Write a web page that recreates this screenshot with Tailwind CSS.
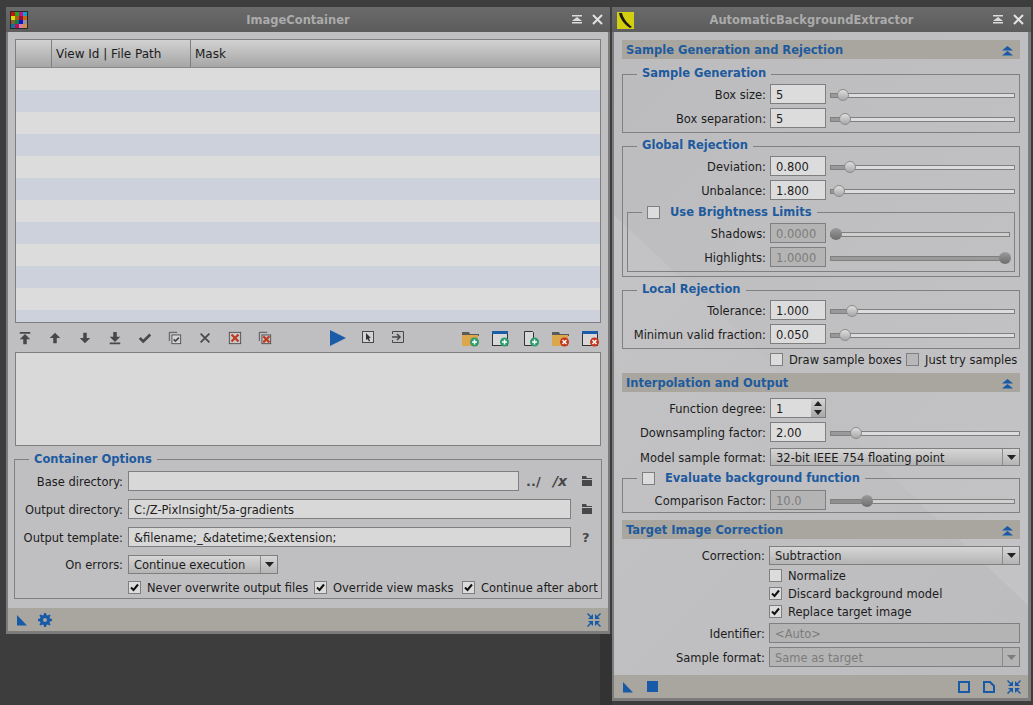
<!DOCTYPE html>
<html lang="en">
  <head>
    <meta charset="UTF-8" />
    <title>PixInsight process windows</title>
    <script src="https://cdn.jsdelivr.net/npm/@tailwindcss/browser@4"></script>
  </head>
  <body class="relative h-[705px] w-[1033px] overflow-hidden bg-[#3d3d3d] font-['DejaVu_Sans',sans-serif] text-[11.5px] leading-[15px] text-[#1c1c1c]">
    <div class="absolute left-[600px] top-[634px] h-[71px] w-[12px] bg-[#333333]"></div>

    <!-- ImageContainer -->
    <div class="absolute left-[6px] top-[7px] flex h-[627px] w-[604px] flex-col border-x-2 border-b-[3px] border-[#7c7c7c]">
      <div class="relative -mx-[2px] flex h-[25px] shrink-0 items-center justify-center bg-gradient-to-b from-[#6a6a6a] to-[#5c5c5c] pr-[20px] pt-[2px] font-bold text-[#ababab]">
        <svg class="absolute left-[4px] top-[4px] size-[18px]" viewBox="0 0 18 18">
          <rect width="18" height="18" fill="#2a2a2a" />
          <rect x="1" y="1" width="4" height="4" fill="#d01010" /><rect x="5" y="1" width="4" height="4" fill="#10b010" /><rect x="9" y="1" width="4" height="4" fill="#c01090" /><rect x="13" y="1" width="4" height="4" fill="#10a0c8" />
          <rect x="1" y="5" width="4" height="4" fill="#e0e000" /><rect x="5" y="5" width="4" height="4" fill="#a06010" /><rect x="9" y="5" width="4" height="4" fill="#901040" /><rect x="13" y="5" width="4" height="4" fill="#d06010" />
          <rect x="1" y="9" width="4" height="4" fill="#806030" /><rect x="5" y="9" width="4" height="4" fill="#108040" /><rect x="9" y="9" width="4" height="4" fill="#1010d0" /><rect x="13" y="9" width="4" height="4" fill="#909090" />
          <rect x="1" y="13" width="4" height="4" fill="#1070a0" /><rect x="5" y="13" width="4" height="4" fill="#c01050" /><rect x="9" y="13" width="4" height="4" fill="#d080b0" /><rect x="13" y="13" width="4" height="4" fill="#d09040" />
        </svg>
        ImageContainer
        <svg class="absolute left-[566px] top-[8px] size-[10px]" viewBox="0 0 10 10" fill="#dcdcdc"><path d="M0 0h10v1.500H0zM5 2l5 4H0zM0 7h10v1.500H0z" /></svg>
        <svg class="absolute left-[586px] top-[7px] size-[11px]" viewBox="0 0 11 11" stroke="#e2e2e2" stroke-width="2"><path d="M1 1l9 9M10 1l-9 9" /></svg>
      </div>

      <div class="flex flex-1 flex-col bg-[#bfbfc1] px-[7px] pt-[7px]">
        <div class="h-[284px] w-[586px] shrink-0 overflow-hidden border border-[#7f7f7f] bg-[#dcdcdc]">
          <div class="flex h-[28px] items-center border-b border-[#8a8a8a] bg-gradient-to-b from-[#d2d2d2] to-[#a6a6a6] text-[12px]">
            <div class="h-full w-[36px] border-r border-[#808080]"></div>
            <div class="flex h-full w-[139px] items-center border-r border-[#808080] pl-[4px] pt-[2px]">View Id | File Path</div>
            <div class="pl-[4px] pt-[2px]">Mask</div>
          </div>
          <div class="h-[22px]"></div>
          <div class="h-[22px] bg-[#cdd1dc]"></div>
          <div class="h-[22px]"></div>
          <div class="h-[22px] bg-[#cdd1dc]"></div>
          <div class="h-[22px]"></div>
          <div class="h-[22px] bg-[#cdd1dc]"></div>
          <div class="h-[22px]"></div>
          <div class="h-[22px] bg-[#cdd1dc]"></div>
          <div class="h-[22px]"></div>
          <div class="h-[22px] bg-[#cdd1dc]"></div>
          <div class="h-[22px]"></div>
          <div class="h-[22px] bg-[#cdd1dc]"></div>
        </div>

        <div class="-mx-[5px] flex h-[29px] shrink-0 items-center justify-between">
          <div class="flex">
            <div class="flex w-[30px] justify-center"><svg class="mt-px size-[14px]" viewBox="0 0 16 16" fill="#484848"><path d="M2 1h12v2H2zM8 3.500l6 6h-4V15H6V9.500H2z" /></svg></div>
            <div class="flex w-[30px] justify-center"><svg class="mt-px size-[14px]" viewBox="0 0 16 16" fill="#484848"><path d="M8 2l6 6h-4v6H6V8H2z" /></svg></div>
            <div class="flex w-[30px] justify-center"><svg class="mt-px size-[14px]" viewBox="0 0 16 16" fill="#484848"><path d="M8 14l6-6h-4V2H6v6H2z" /></svg></div>
            <div class="flex w-[30px] justify-center"><svg class="mt-px size-[14px]" viewBox="0 0 16 16" fill="#484848"><path d="M2 13h12v2H2zM8 12.500l6-6h-4V1H6v5.500H2z" /></svg></div>
            <div class="flex w-[30px] justify-center"><svg class="mt-px size-[14px]" viewBox="0 0 16 16" fill="none" stroke="#484848" stroke-width="3"><path d="M2 8l4 4 8-8" /></svg></div>
            <div class="flex w-[30px] justify-center"><svg class="mt-px size-[14px]" viewBox="0 0 16 16" fill="none" stroke="#484848"><path d="M1.500 11.500v-10h9" /><rect x="4.500" y="4.500" width="10" height="10" fill="#d4d4d4" /><path d="M6.500 9.500l2 2 4-4" stroke-width="2" /></svg></div>
            <div class="flex w-[30px] justify-center"><svg class="mt-px size-[14px]" viewBox="0 0 16 16" stroke="#484848" stroke-width="2"><path d="M3 3l10 10M13 3L3 13" /></svg></div>
            <div class="flex w-[30px] justify-center"><svg class="mt-px size-[14px]" viewBox="0 0 16 16"><rect x="1.500" y="1.500" width="13" height="13" fill="#c8c8c8" stroke="#484848" /><path d="M4 4l8 8M12 4l-8 8" stroke="#c03a20" stroke-width="2.500" /></svg></div>
            <div class="flex w-[30px] justify-center"><svg class="mt-px size-[14px]" viewBox="0 0 16 16"><path d="M1.500 11.500v-10h9" fill="none" stroke="#484848" /><rect x="4.500" y="4.500" width="10" height="10" fill="#c8c8c8" stroke="#484848" /><path d="M6 6l7 7M13 6l-7 7" stroke="#c03a20" stroke-width="2.500" /></svg></div>
          </div>
          <div class="flex">
            <div class="flex w-[30px] justify-center"><svg class="mt-px size-[16px]" viewBox="0 0 16 16" fill="#1a5ca8"><path d="M0 0l16 8-16 8z" /></svg></div>
            <div class="flex w-[30px] justify-center"><svg class="mt-[2px] size-[12px]" viewBox="0 0 12 12"><rect x=".5" y=".5" width="11" height="11" fill="#d4d4d4" stroke="#484848" /><path d="M4 2l5 5H7l1 3-1 .5L5.500 8 4 9z" fill="#333333" /></svg></div>
            <div class="flex w-[30px] justify-center"><svg class="mt-[2px] size-[12px]" viewBox="0 0 12 12" fill="none" stroke="#484848"><path d="M.5 3V.5h11v11H.5V9" /><path d="M0 6h7M5 3l3 3-3 3" stroke-width="1.500" /></svg></div>
          </div>
          <div class="flex">
            <div class="flex w-[30px] justify-center"><svg class="mt-[2px] size-[18px]" viewBox="0 0 18 18"><path d="M0 2h7l1 2h9v2H0z" fill="#5a5a5a" /><rect y="5" width="16" height="11" fill="#dba64c" /><circle cx="12.500" cy="12" r="4.500" fill="#2f9b6d" /><path d="M10 12h5M12.500 9.500v5" stroke="#ffffff" stroke-width="1.500" /></svg></div>
            <div class="flex w-[30px] justify-center"><svg class="mt-[2px] size-[18px]" viewBox="0 0 18 18"><rect x=".5" y="1.500" width="15" height="14" fill="#d8d8d8" stroke="#333333" /><rect y="1" width="16" height="3" fill="#1c5ca8" /><circle cx="12.500" cy="12" r="4.500" fill="#2f9b6d" /><path d="M10 12h5M12.500 9.500v5" stroke="#ffffff" stroke-width="1.500" /></svg></div>
            <div class="flex w-[30px] justify-center"><svg class="mt-[2px] size-[18px]" viewBox="0 0 18 18"><path d="M2.500 1.500h8l1 1v13h-9z" fill="#d8d8d8" stroke="#333333" /><circle cx="12.500" cy="12" r="4.500" fill="#2f9b6d" /><path d="M10 12h5M12.500 9.500v5" stroke="#ffffff" stroke-width="1.500" /></svg></div>
            <div class="flex w-[30px] justify-center"><svg class="mt-[2px] size-[18px]" viewBox="0 0 18 18"><path d="M0 2h7l1 2h9v2H0z" fill="#5a5a5a" /><rect y="5" width="16" height="11" fill="#dba64c" /><circle cx="12.500" cy="12" r="4.500" fill="#c4371f" /><path d="M10.500 10l4 4M14.500 10l-4 4" stroke="#ffffff" stroke-width="1.500" /></svg></div>
            <div class="flex w-[30px] justify-center"><svg class="mt-[2px] size-[18px]" viewBox="0 0 18 18"><rect x=".5" y="1.500" width="15" height="14" fill="#d8d8d8" stroke="#333333" /><rect y="1" width="16" height="3" fill="#1c5ca8" /><circle cx="12.500" cy="12" r="4.500" fill="#c4371f" /><path d="M10.500 10l4 4M14.500 10l-4 4" stroke="#ffffff" stroke-width="1.500" /></svg></div>
          </div>
        </div>

        <div class="h-[94px] w-[586px] shrink-0 border border-[#7f7f7f] bg-[#d9d9d9]"></div>

        <fieldset class="mt-[6px] -ml-px h-[147px] w-[588px] shrink-0 border border-[#808080]">
          <legend class="ml-[14px] h-[14px] px-[5px] leading-[15px] font-bold text-[#1d5a9e]">Container Options</legend>
          <div class="mt-[5px] flex h-[20px] items-center">
            <div class="w-[108px] pt-[2px] text-right">Base directory:</div>
            <div class="ml-[5px] h-[20px] w-[391px] border border-[#7f7f7f] bg-[#d8d8d8]"></div>
            <div class="ml-[7px] w-[16px] text-[13px] font-bold text-[#484848]">../</div>
            <div class="ml-[11px] w-[15px] text-[14px] font-bold italic text-[#484848]">/x</div>
            <svg class="ml-[13px] size-[12px]" viewBox="0 0 12 12" fill="#484848"><path d="M1 1h4l1 2h5v1H1zM1 5h10v6H1z" /></svg>
          </div>
          <div class="mt-[8px] flex h-[20px] items-center">
            <div class="w-[108px] pt-[2px] text-right">Output directory:</div>
            <div class="ml-[5px] flex h-[20px] w-[443px] items-center border border-[#7f7f7f] bg-[#d8d8d8] px-[5px] pt-[2px]">C:/Z-PixInsight/5a-gradients</div>
            <svg class="ml-[10px] size-[12px]" viewBox="0 0 12 12" fill="#484848"><path d="M1 1h4l1 2h5v1H1zM1 5h10v6H1z" /></svg>
          </div>
          <div class="mt-[8px] flex h-[20px] items-center">
            <div class="w-[108px] pt-[2px] text-right">Output template:</div>
            <div class="ml-[5px] flex h-[20px] w-[443px] items-center border border-[#7f7f7f] bg-[#d8d8d8] px-[5px] pt-[2px]">&amp;filename;_&amp;datetime;&amp;extension;</div>
            <div class="ml-[11px] text-[13px] font-bold text-[#484848]">?</div>
          </div>
          <div class="mt-[8px] flex h-[19px] items-center">
            <div class="w-[108px] pt-[2px] text-right">On errors:</div>
            <div class="ml-[5px] flex h-[19px] w-[150px] items-center border border-[#7f7f7f] bg-gradient-to-b from-[#d6d6d6] to-[#b4b4b4]">
              <div class="flex-1 pl-[5px] pt-[2px]">Continue execution</div>
              <div class="flex h-full w-[17px] items-center justify-center border-l border-[#8a8a8a]"><svg class="h-[5px] w-[9px]" viewBox="0 0 9 5" fill="#222222"><path d="M0 0h9L4.500 5z" /></svg></div>
            </div>
          </div>
          <div class="mt-[7px] flex h-[13px] items-center whitespace-nowrap pl-[113px]">
            <svg class="size-[13px] shrink-0" viewBox="0 0 13 13"><rect x=".5" y=".5" width="12" height="12" fill="#dcdcdc" stroke="#7f7f7f" /><path d="M3 6.500l2.500 2.500L10 3.500" fill="none" stroke="#111111" stroke-width="2" /></svg>
            <div class="ml-[6px] w-[167px] pt-[2px]">Never overwrite output files</div>
            <svg class="size-[13px] shrink-0" viewBox="0 0 13 13"><rect x=".5" y=".5" width="12" height="12" fill="#dcdcdc" stroke="#7f7f7f" /><path d="M3 6.500l2.500 2.500L10 3.500" fill="none" stroke="#111111" stroke-width="2" /></svg>
            <div class="ml-[6px] w-[129px] pt-[2px]">Override view masks</div>
            <svg class="size-[13px] shrink-0" viewBox="0 0 13 13"><rect x=".5" y=".5" width="12" height="12" fill="#dcdcdc" stroke="#7f7f7f" /><path d="M3 6.500l2.500 2.500L10 3.500" fill="none" stroke="#111111" stroke-width="2" /></svg>
            <div class="ml-[6px] pt-[2px]">Continue after abort</div>
          </div>
        </fieldset>
      </div>

      <div class="flex h-[23px] shrink-0 items-center bg-[#a9a69f] pl-[8px] pr-[7px]">
        <svg class="size-[12px]" viewBox="0 0 12 12" fill="#165aa8"><path d="M1 1l10 10.500H1z" /></svg>
        <svg class="ml-[10px] size-[14px]" viewBox="0 0 14 14" fill="#165aa8"><path d="M6 0h2l.4 2 1.300.5L11.400 1.400l1.200 1.200-1.100 1.700.5 1.300 2 .4v2l-2 .4-.5 1.300 1.100 1.700-1.200 1.200-1.700-1.100-1.300.5L8 14H6l-.4-2-1.300-.5-1.700 1.100-1.200-1.200 1.100-1.700-.5-1.300L0 8V6l2-.4.5-1.300-1.100-1.700 1.200-1.200 1.700 1.100L5.600 2zM7 5a2 2 0 100 4 2 2 0 000-4z" /></svg>
        <svg class="ml-auto size-[14px]" viewBox="0 0 14 14" fill="#165aa8"><path d="M0 1l1-1 3 3 2-2v5H1l2-2zM14 1l-1-1-3 3-2-2v5h5l-2-2zM0 13l1 1 3-3 2 2V8H1l2 2zM14 13l-1 1-3-3-2 2V8h5l-2 2z" /></svg>
      </div>
    </div>

    <!-- AutomaticBackgroundExtractor -->
    <div class="absolute left-[612px] top-[7px] flex h-[694px] w-[419px] flex-col border-l-2 border-r-[3px] border-b-[3px] border-[#7c7c7c]">
      <div class="relative -ml-[2px] -mr-[3px] flex h-[25px] shrink-0 items-center justify-center bg-gradient-to-b from-[#6a6a6a] to-[#5c5c5c] pr-[20px] pt-[2px] font-bold text-[#ababab]">
        <svg class="absolute left-[5px] top-[5px] size-[17px]" viewBox="0 0 17 17">
          <rect width="17" height="17" fill="#d4cf0e" />
          <path d="M2 1c1 6 6 12 11 15l2-1C10 11 6 6 5 1z" fill="#1c1a10" />
        </svg>
        AutomaticBackgroundExtractor
        <svg class="absolute left-[381px] top-[8px] size-[10px]" viewBox="0 0 10 10" fill="#dcdcdc"><path d="M0 0h10v1.500H0zM5 2l5 4H0zM0 7h10v1.500H0z" /></svg>
        <svg class="absolute left-[401px] top-[7px] size-[11px]" viewBox="0 0 11 11" stroke="#e2e2e2" stroke-width="2"><path d="M1 1l9 9M10 1l-9 9" /></svg>
      </div>

      <div class="relative flex-1 bg-[linear-gradient(135deg,#bcbcbe,#c4c4c6)]">
        <!-- lighter wedge of the panel background -->
        <div class="absolute inset-0 bg-[linear-gradient(135deg,#c5c5c7,#bcbcbe)] [clip-path:polygon(0_183px,414px_573px,414px_643px,0_643px)]"></div>

        <div class="relative flex h-full flex-col px-[8px] pt-[8px]">
          <div class="flex h-[19px] shrink-0 items-center justify-between bg-[#a9a69f] pl-[4px] pr-[7px] pt-[2px] font-bold text-[#1d5a9e]">
            Sample Generation and Rejection
            <svg class="h-[10px] w-[11px]" viewBox="0 0 11 10" fill="#165aa8"><path d="M5.500 0L11 4.500H0zM5.500 5L11 9.500H0z" /></svg>
          </div>

          <fieldset class="mt-[8px] h-[66px] shrink-0 border border-[#808080]">
            <legend class="ml-[14px] h-[14px] px-[5px] leading-[13px] font-bold text-[#1d5a9e]">Sample Generation</legend>
            <div class="mt-[3px] flex h-[20px] items-center">
              <div class="w-[143px] pt-[2px] text-right">Box size:</div>
              <div class="ml-[4px] flex h-[20px] w-[56px] items-center border border-[#7f7f7f] bg-[#dcdcdc] px-[5px] pt-[2px]">5</div>
              <div class="relative ml-[4px] mt-[2px] h-[5px] w-[185px] border border-[#7f7f7f] bg-[#dcdcdc]"><div class="h-full bg-[#999999]" style="width: 7px"></div><div class="absolute top-1/2 -ml-[6px] size-[12px] -translate-y-1/2 rounded-full border border-[#8c8c8c] bg-gradient-to-b from-[#dedede] to-[#a8a8a8]" style="left: 12px"></div></div>
            </div>
            <div class="mt-[4px] flex h-[20px] items-center">
              <div class="w-[143px] pt-[2px] text-right">Box separation:</div>
              <div class="ml-[4px] flex h-[20px] w-[56px] items-center border border-[#7f7f7f] bg-[#dcdcdc] px-[5px] pt-[2px]">5</div>
              <div class="relative ml-[4px] mt-[2px] h-[5px] w-[185px] border border-[#7f7f7f] bg-[#dcdcdc]"><div class="h-full bg-[#999999]" style="width: 10px"></div><div class="absolute top-1/2 -ml-[6px] size-[12px] -translate-y-1/2 rounded-full border border-[#8c8c8c] bg-gradient-to-b from-[#dedede] to-[#a8a8a8]" style="left: 14px"></div></div>
            </div>
          </fieldset>

          <fieldset class="mt-[6px] h-[138px] shrink-0 border border-[#808080]">
            <legend class="ml-[14px] h-[14px] px-[5px] leading-[13px] font-bold text-[#1d5a9e]">Global Rejection</legend>
            <div class="mt-[3px] flex h-[20px] items-center">
              <div class="w-[143px] pt-[2px] text-right">Deviation:</div>
              <div class="ml-[4px] flex h-[20px] w-[56px] items-center border border-[#7f7f7f] bg-[#dcdcdc] px-[5px] pt-[2px]">0.800</div>
              <div class="relative ml-[4px] mt-[2px] h-[5px] w-[185px] border border-[#7f7f7f] bg-[#dcdcdc]"><div class="h-full bg-[#999999]" style="width: 14px"></div><div class="absolute top-1/2 -ml-[6px] size-[12px] -translate-y-1/2 rounded-full border border-[#8c8c8c] bg-gradient-to-b from-[#dedede] to-[#a8a8a8]" style="left: 19px"></div></div>
            </div>
            <div class="mt-[4px] flex h-[20px] items-center">
              <div class="w-[143px] pt-[2px] text-right">Unbalance:</div>
              <div class="ml-[4px] flex h-[20px] w-[56px] items-center border border-[#7f7f7f] bg-[#dcdcdc] px-[5px] pt-[2px]">1.800</div>
              <div class="relative ml-[4px] mt-[2px] h-[5px] w-[185px] border border-[#7f7f7f] bg-[#dcdcdc]"><div class="h-full bg-[#999999]" style="width: 3px"></div><div class="absolute top-1/2 -ml-[6px] size-[12px] -translate-y-1/2 rounded-full border border-[#8c8c8c] bg-gradient-to-b from-[#dedede] to-[#a8a8a8]" style="left: 8px"></div></div>
            </div>
            <fieldset class="mx-[4px] mt-[5px] h-[67px] border border-[#808080]">
              <legend class="ml-[14px] flex h-[14px] items-center px-[5px] leading-[13px] font-bold text-[#1d5a9e]">
                <svg class="mr-[10px] size-[13px]" viewBox="0 0 13 13"><rect x=".5" y=".5" width="12" height="12" fill="#dcdcdc" stroke="#7f7f7f" /></svg>
                Use Brightness Limits
              </legend>
              <div class="mt-[4px] flex h-[20px] items-center">
                <div class="w-[138px] pt-[2px] text-right">Shadows:</div>
                <div class="ml-[4px] flex h-[20px] w-[56px] items-center border border-[#7f7f7f] bg-[#b4b4b4] px-[5px] pt-[2px] text-[#7c7c7c]">0.0000</div>
                <div class="relative ml-[4px] mt-[2px] h-[5px] w-[180px] border border-[#7f7f7f] bg-[#cfcfcf]"><div class="absolute top-1/2 -ml-[6px] size-[12px] -translate-y-1/2 rounded-full bg-gradient-to-b from-[#9a9a9a] to-[#6e6e6e]" style="left: 5px"></div></div>
              </div>
              <div class="mt-[4px] flex h-[20px] items-center">
                <div class="w-[138px] pt-[2px] text-right">Highlights:</div>
                <div class="ml-[4px] flex h-[20px] w-[56px] items-center border border-[#7f7f7f] bg-[#b4b4b4] px-[5px] pt-[2px] text-[#7c7c7c]">1.0000</div>
                <div class="relative ml-[4px] mt-[2px] h-[5px] w-[180px] border border-[#7f7f7f] bg-[#9a9a9a]"><div class="absolute top-1/2 -ml-[6px] size-[12px] -translate-y-1/2 rounded-full bg-gradient-to-b from-[#9a9a9a] to-[#6e6e6e]" style="left: 174px"></div></div>
              </div>
            </fieldset>
          </fieldset>

          <fieldset class="mt-[6px] h-[66px] shrink-0 border border-[#808080]">
            <legend class="ml-[14px] h-[14px] px-[5px] leading-[13px] font-bold text-[#1d5a9e]">Local Rejection</legend>
            <div class="mt-[3px] flex h-[20px] items-center">
              <div class="w-[143px] pt-[2px] text-right">Tolerance:</div>
              <div class="ml-[4px] flex h-[20px] w-[56px] items-center border border-[#7f7f7f] bg-[#dcdcdc] px-[5px] pt-[2px]">1.000</div>
              <div class="relative ml-[4px] mt-[2px] h-[5px] w-[185px] border border-[#7f7f7f] bg-[#dcdcdc]"><div class="h-full bg-[#999999]" style="width: 17px"></div><div class="absolute top-1/2 -ml-[6px] size-[12px] -translate-y-1/2 rounded-full border border-[#8c8c8c] bg-gradient-to-b from-[#dedede] to-[#a8a8a8]" style="left: 21px"></div></div>
            </div>
            <div class="mt-[4px] flex h-[20px] items-center">
              <div class="w-[143px] pt-[2px] text-right">Minimun valid fraction:</div>
              <div class="ml-[4px] flex h-[20px] w-[56px] items-center border border-[#7f7f7f] bg-[#dcdcdc] px-[5px] pt-[2px]">0.050</div>
              <div class="relative ml-[4px] mt-[2px] h-[5px] w-[185px] border border-[#7f7f7f] bg-[#dcdcdc]"><div class="h-full bg-[#999999]" style="width: 10px"></div><div class="absolute top-1/2 -ml-[6px] size-[12px] -translate-y-1/2 rounded-full border border-[#8c8c8c] bg-gradient-to-b from-[#dedede] to-[#a8a8a8]" style="left: 14px"></div></div>
            </div>
          </fieldset>

          <div class="mt-[4px] flex h-[13px] shrink-0 items-center whitespace-nowrap pl-[148px]">
            <svg class="size-[13px] shrink-0" viewBox="0 0 13 13"><rect x=".5" y=".5" width="12" height="12" fill="#dcdcdc" stroke="#7f7f7f" /></svg>
            <div class="ml-[6px] w-[117px] pt-[2px]">Draw sample boxes</div>
            <svg class="size-[13px] shrink-0" viewBox="0 0 13 13"><rect x=".5" y=".5" width="12" height="12" fill="#b8b8b8" stroke="#7f7f7f" /></svg>
            <div class="ml-[6px] pt-[2px]">Just try samples</div>
          </div>

          <div class="mt-[7px] flex h-[19px] shrink-0 items-center justify-between bg-[#a9a69f] pl-[4px] pr-[7px] pt-[2px] font-bold text-[#1d5a9e]">
            Interpolation and Output
            <svg class="h-[10px] w-[11px]" viewBox="0 0 11 10" fill="#165aa8"><path d="M5.500 0L11 4.500H0zM5.500 5L11 9.500H0z" /></svg>
          </div>

          <div class="mt-[6px] flex h-[20px] shrink-0 items-center">
            <div class="w-[144px] pt-[2px] text-right">Function degree:</div>
            <div class="ml-[4px] flex h-[20px] w-[56px] items-center border border-[#7f7f7f] bg-[#dcdcdc] pl-[5px]">
              <div class="flex-1 pt-[2px]">1</div>
              <div class="flex h-full w-[14px] flex-col items-center justify-around bg-gradient-to-b from-[#d4d4d4] to-[#a8a8a8]">
                <svg class="h-[5px] w-[8px]" viewBox="0 0 8 5" fill="#222222"><path d="M4 0l4 5H0z" /></svg>
                <svg class="h-[5px] w-[8px]" viewBox="0 0 8 5" fill="#222222"><path d="M0 0h8L4 5z" /></svg>
              </div>
            </div>
          </div>
          <div class="mt-[4px] flex h-[20px] shrink-0 items-center">
            <div class="w-[144px] pt-[2px] text-right">Downsampling factor:</div>
            <div class="ml-[4px] flex h-[20px] w-[56px] items-center border border-[#7f7f7f] bg-[#dcdcdc] px-[5px] pt-[2px]">2.00</div>
            <div class="relative ml-[4px] mt-[2px] h-[5px] w-[190px] border border-[#7f7f7f] bg-[#dcdcdc]"><div class="h-full bg-[#999999]" style="width: 21px"></div><div class="absolute top-1/2 -ml-[6px] size-[12px] -translate-y-1/2 rounded-full border border-[#8c8c8c] bg-gradient-to-b from-[#dedede] to-[#a8a8a8]" style="left: 25px"></div></div>
          </div>
          <div class="mt-[6px] flex h-[18px] shrink-0 items-center">
            <div class="w-[144px] pt-[2px] text-right">Model sample format:</div>
            <div class="ml-[4px] flex h-[18px] w-[250px] items-center border border-[#7f7f7f] bg-gradient-to-b from-[#d6d6d6] to-[#b4b4b4]">
              <div class="flex-1 pl-[5px] pt-[2px]">32-bit IEEE 754 floating point</div>
              <div class="flex h-full w-[17px] items-center justify-center border-l border-[#8a8a8a]"><svg class="h-[5px] w-[9px]" viewBox="0 0 9 5" fill="#222222"><path d="M0 0h9L4.500 5z" /></svg></div>
            </div>
          </div>

          <fieldset class="mt-[5px] h-[42px] shrink-0 border border-[#808080]">
            <legend class="ml-[14px] flex h-[14px] items-center px-[5px] leading-[13px] font-bold text-[#1d5a9e]">
              <svg class="mr-[10px] size-[13px]" viewBox="0 0 13 13"><rect x=".5" y=".5" width="12" height="12" fill="#dcdcdc" stroke="#7f7f7f" /></svg>
              Evaluate background function
            </legend>
            <div class="mt-[5px] flex h-[20px] items-center">
              <div class="w-[143px] pt-[2px] text-right">Comparison Factor:</div>
              <div class="ml-[4px] flex h-[20px] w-[56px] items-center border border-[#7f7f7f] bg-[#b4b4b4] px-[5px] pt-[2px] text-[#7c7c7c]">10.0</div>
              <div class="relative ml-[4px] mt-[2px] h-[5px] w-[185px] border border-[#7f7f7f] bg-[#cfcfcf]"><div class="h-full bg-[#8f8f8f]" style="width: 34px"></div><div class="absolute top-1/2 -ml-[6px] size-[12px] -translate-y-1/2 rounded-full bg-gradient-to-b from-[#9a9a9a] to-[#6e6e6e]" style="left: 36px"></div></div>
            </div>
          </fieldset>

          <div class="mt-[7px] flex h-[19px] shrink-0 items-center justify-between bg-[#a9a69f] pl-[4px] pr-[7px] pt-[2px] font-bold text-[#1d5a9e]">
            Target Image Correction
            <svg class="h-[10px] w-[11px]" viewBox="0 0 11 10" fill="#165aa8"><path d="M5.500 0L11 4.500H0zM5.500 5L11 9.500H0z" /></svg>
          </div>

          <div class="mt-[7px] flex h-[19px] shrink-0 items-center">
            <div class="w-[143px] pt-[2px] text-right">Correction:</div>
            <div class="ml-[4px] flex h-[19px] w-[251px] items-center border border-[#7f7f7f] bg-gradient-to-b from-[#d6d6d6] to-[#b4b4b4]">
              <div class="flex-1 pl-[5px] pt-[2px]">Subtraction</div>
              <div class="flex h-full w-[17px] items-center justify-center border-l border-[#8a8a8a]"><svg class="h-[5px] w-[9px]" viewBox="0 0 9 5" fill="#222222"><path d="M0 0h9L4.500 5z" /></svg></div>
            </div>
          </div>
          <div class="mt-[4px] flex h-[13px] shrink-0 items-center pl-[147px]">
            <svg class="size-[13px]" viewBox="0 0 13 13"><rect x=".5" y=".5" width="12" height="12" fill="#dcdcdc" stroke="#7f7f7f" /></svg>
            <div class="ml-[6px] pt-[2px]">Normalize</div>
          </div>
          <div class="mt-[5px] flex h-[13px] shrink-0 items-center pl-[147px]">
            <svg class="size-[13px]" viewBox="0 0 13 13"><rect x=".5" y=".5" width="12" height="12" fill="#dcdcdc" stroke="#7f7f7f" /><path d="M3 6.500l2.500 2.500L10 3.500" fill="none" stroke="#111111" stroke-width="2" /></svg>
            <div class="ml-[6px] pt-[2px]">Discard background model</div>
          </div>
          <div class="mt-[5px] flex h-[13px] shrink-0 items-center pl-[147px]">
            <svg class="size-[13px]" viewBox="0 0 13 13"><rect x=".5" y=".5" width="12" height="12" fill="#dcdcdc" stroke="#7f7f7f" /><path d="M3 6.500l2.500 2.500L10 3.500" fill="none" stroke="#111111" stroke-width="2" /></svg>
            <div class="ml-[6px] pt-[2px]">Replace target image</div>
          </div>
          <div class="mt-[5px] flex h-[20px] shrink-0 items-center">
            <div class="w-[143px] pt-[2px] text-right">Identifier:</div>
            <div class="ml-[4px] flex h-[20px] w-[251px] items-center border border-[#7f7f7f] bg-[#b4b4b4] px-[5px] pt-[2px] text-[#7c7c7c]">&lt;Auto&gt;</div>
          </div>
          <div class="mt-[4px] flex h-[20px] shrink-0 items-center">
            <div class="w-[143px] pt-[2px] text-right">Sample format:</div>
            <div class="ml-[4px] flex h-[20px] w-[251px] items-center border border-[#7f7f7f] bg-[#b4b4b4] text-[#7c7c7c]">
              <div class="flex-1 pl-[5px] pt-[2px]">Same as target</div>
              <div class="flex h-full w-[17px] items-center justify-center border-l border-[#8a8a8a]"><svg class="h-[5px] w-[9px]" viewBox="0 0 9 5" fill="#7c7c7c"><path d="M0 0h9L4.500 5z" /></svg></div>
            </div>
          </div>
        </div>
      </div>

      <div class="flex h-[23px] shrink-0 items-center bg-[#a9a69f] pl-[8px] pr-[7px]">
        <svg class="size-[12px]" viewBox="0 0 12 12" fill="#165aa8"><path d="M1 1l10 10.500H1z" /></svg>
        <div class="ml-[13px] size-[11px] bg-[#165aa8]"></div>
        <svg class="ml-auto size-[12px]" viewBox="0 0 12 12" fill="none" stroke="#165aa8" stroke-width="2"><rect x="1" y="1" width="10" height="10" /></svg>
        <svg class="ml-[13px] size-[12px]" viewBox="0 0 12 12" fill="none" stroke="#165aa8" stroke-width="2"><path d="M1 1h6l4 4v6H1z" /></svg>
        <svg class="ml-[12px] size-[14px]" viewBox="0 0 14 14" fill="#165aa8"><path d="M0 1l1-1 3 3 2-2v5H1l2-2zM14 1l-1-1-3 3-2-2v5h5l-2-2zM0 13l1 1 3-3 2 2V8H1l2 2zM14 13l-1 1-3-3-2 2V8h5l-2 2z" /></svg>
      </div>
    </div>
  </body>
</html>
